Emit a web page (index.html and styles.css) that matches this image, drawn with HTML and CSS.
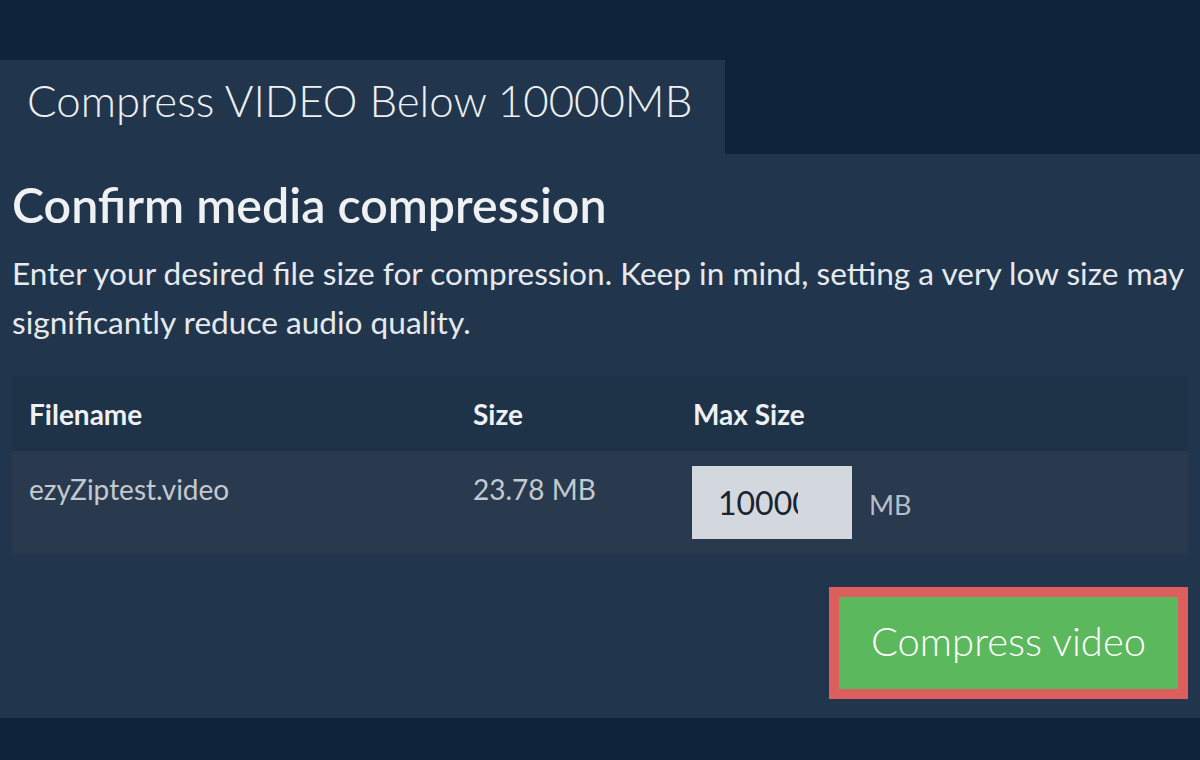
FILE: index.html
```html
<!DOCTYPE html>
<html lang="en">
<head>
<meta charset="utf-8">
<title>Compress VIDEO Below 10000MB</title>
<link rel="stylesheet" href="styles.css">
</head>
<body>
<div class="page">
  <div class="tabs">
    <div class="tab">Compress VIDEO Below 10000MB</div>
  </div>
  <section class="panel">
    <h1 class="heading">Confirm media compression</h1>
    <p class="intro">Enter your desired file size for compression. Keep in mind, setting a very low size may significantly reduce audio quality.</p>
    <table class="files">
      <thead>
        <tr>
          <th class="col-name">Filename</th>
          <th class="col-size">Size</th>
          <th class="col-max">Max Size</th>
        </tr>
      </thead>
      <tbody>
        <tr>
          <td class="col-name">ezyZiptest.video</td>
          <td class="col-size">23.78 MB</td>
          <td class="col-max"><div class="max-wrap"><input class="max-input" type="text" value="10000"><span class="unit">MB</span></div></td>
        </tr>
      </tbody>
    </table>
    <div class="actions">
      <button class="compress-btn" type="button">Compress video</button>
    </div>
  </section>
</div>
</body>
</html>
```

FILE: styles.css
```css
html, body {
  margin: 0;
  padding: 0;
}
body {
  background: #0f233a;
  font-family: Lato, "Open Sans", sans-serif;
  color: #eceef1;
  width: 1200px;
  height: 760px;
  overflow: hidden;
}
.page {
  padding-top: 60px;
}
.tabs {
  display: flex;
}
.tab {
  width: 725px;
  height: 94px;
  box-sizing: border-box;
  padding-left: 27px;
  background: #21364d;
  font-size: 43.8px;
  font-weight: 300;
  line-height: 80px;
  color: #eef0f2;
  white-space: nowrap;
}
.panel {
  background: #21364d;
  padding: 22px 12px 19px;
}
.heading {
  margin: 0;
  font-size: 48.3px;
  font-weight: 600;
  line-height: 56px;
  color: #eef0f2;
}
.intro {
  margin: 17px 0 0;
  font-size: 31.6px;
  line-height: 49px;
  color: #e6e9ed;
}
.files {
  width: 100%;
  margin-top: 29px;
  border-collapse: collapse;
  table-layout: fixed;
}
.files th {
  background: #1e3348;
  text-align: left;
  font-size: 28px;
  font-weight: 700;
  color: #eef0f2;
  height: 75px;
  padding: 0 17px;
  box-sizing: border-box;
}
.files td {
  background: #2a3a4e;
  font-size: 28px;
  line-height: 34px;
  color: #c3c9d0;
  vertical-align: top;
  padding: 21px 17px 0;
  height: 103px;
  box-sizing: border-box;
}
.col-name { width: 444px; }
.col-size { width: 220px; }
.files td.col-max {
  padding: 15px 16px 0;
}
.max-wrap {
  display: flex;
  align-items: center;
  gap: 17px;
}
.max-input {
  width: 160px;
  height: 73px;
  box-sizing: border-box;
  border: none;
  background: #d3d8de;
  padding: 0 54px 0 26px;
  font-family: Lato, "Open Sans", sans-serif;
  font-size: 32px;
  color: #1b2331;
  outline: none;
}
.unit {
  font-size: 27px;
  color: #b7bec7;
  padding-top: 4px;
}
.actions {
  display: flex;
  justify-content: flex-end;
  margin-top: 33px;
}
.compress-btn {
  width: 359px;
  height: 112px;
  box-sizing: border-box;
  border: 10px solid #dc5f5d;
  background: #5cb85c;
  color: #ffffff;
  font-family: Lato, "Open Sans", sans-serif;
  font-size: 40px;
  font-weight: 300;
  padding: 0 0 4px;
  cursor: pointer;
}
```
